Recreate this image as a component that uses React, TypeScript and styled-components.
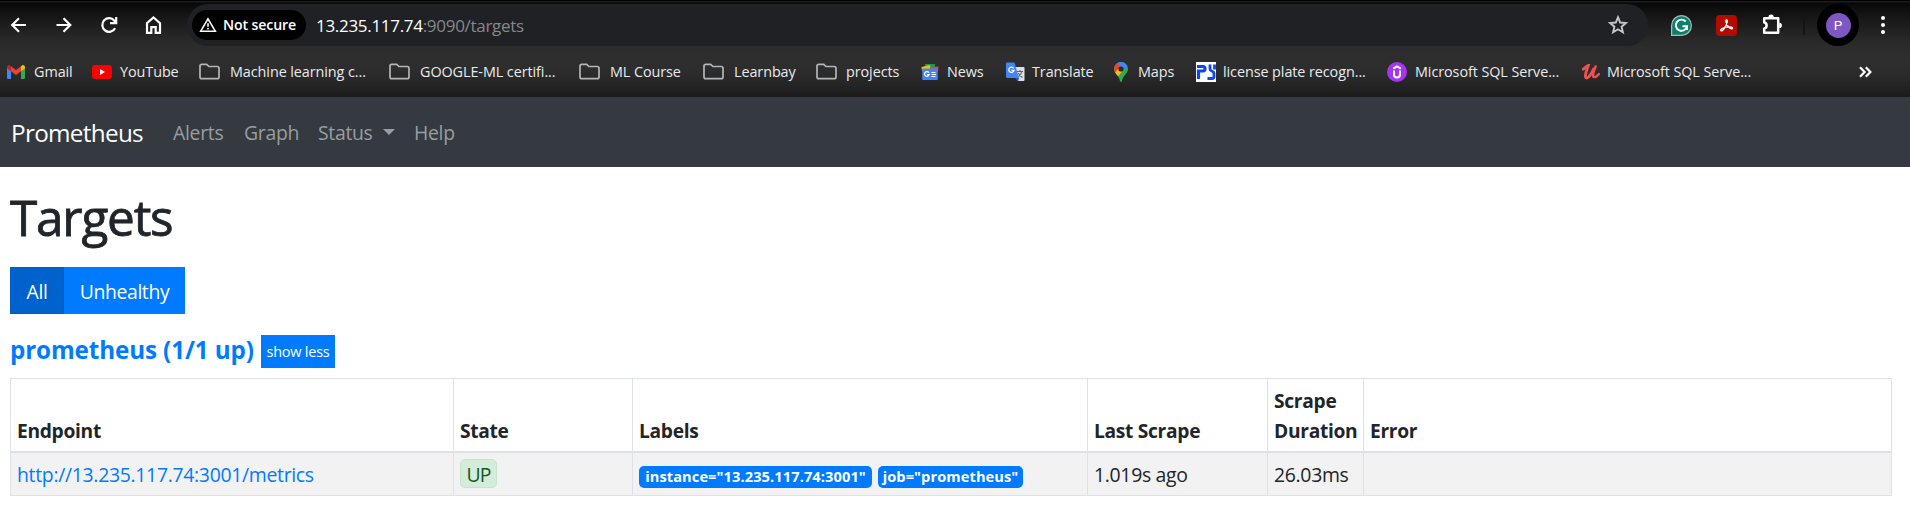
import React from 'react';
import styled, { createGlobalStyle } from 'styled-components';

const Global = createGlobalStyle`
  *, *::before, *::after { box-sizing: border-box; }
  body {
    margin: 0;
    background: #fff;
    color: #212529;
    font-family: 'Open Sans', 'Noto Sans', sans-serif;
    font-size: 19.4px;
    letter-spacing: -0.3px;
    line-height: 30px;
    overflow: hidden;
  }
  svg { display: block; flex: none; }
`;

/* ---------- browser chrome ---------- */

const Chrome = styled.header`
  height: 97px;
  display: flex;
  flex-direction: column;
  background: linear-gradient(#000 0, #000 1px, #1c1c1c 1px, #1c1c1c 2px, #080808 3px, #0e0e0e 8px, #191919 20px, #272727 38px, #2e2e2e 52px, #2d2d2d 70px, #252525 84px, #1b1b1b 97px);
  color: #fff;
`;

const Toolbar = styled.div`
  height: 50px;
  display: flex;
  align-items: center;
`;

const NavIcons = styled.div`
  width: 187px;
  padding-left: 9px;
  display: flex;
  gap: 25px;
`;

const Omnibox = styled.div`
  width: 1461px;
  height: 42px;
  border-radius: 21px;
  background: #202124;
  padding: 0 19px 0 5px;
  display: flex;
  align-items: center;
`;

const Secure = styled.div`
  width: 114px;
  height: 30px;
  border-radius: 15px;
  background: #000;
  display: flex;
  align-items: center;
  gap: 6px;
  padding-left: 7px;
  font-size: 14.2px;
  font-weight: 600;
  letter-spacing: -0.15px;
  white-space: nowrap;
`;

const Url = styled.div`
  margin-left: 10px;
  flex: 1;
  font-size: 17px;
  letter-spacing: -0.3px;
  padding-top: 1px;
`;

const UrlRest = styled.span`
  color: #85888c;
`;

const Extensions = styled.div`
  margin-left: 23px;
  display: flex;
  align-items: center;
  gap: 24px;
`;

const Divider = styled.div`
  width: 2px;
  height: 20px;
  margin: 0 12px 0 20px;
  background: #151515;
`;

const AvatarRing = styled.div`
  width: 42px;
  height: 42px;
  border-radius: 50%;
  background: #000;
  display: flex;
  align-items: center;
  justify-content: center;
`;

const Avatar = styled.div`
  width: 25px;
  height: 25px;
  border-radius: 50%;
  background: #7e57c2;
  font: 13.5px/25px Roboto, sans-serif;
  letter-spacing: 0;
  text-align: center;
`;

const Dots = styled.div`
  margin-left: 22px;
  display: flex;
  flex-direction: column;
  gap: 3px;
`;

const Dot = styled.i`
  width: 4px;
  height: 4px;
  border-radius: 50%;
  background: #fff;
`;

const Bookmarks = styled.div`
  height: 43px;
  padding-left: 7px;
  display: flex;
  align-items: center;
  font-size: 14.4px;
  letter-spacing: -0.08px;
  color: #e8eaed;
`;

const Bookmark = styled.div<{ $width: number }>`
  width: ${p => p.$width}px;
  display: flex;
  align-items: center;
  white-space: nowrap;
`;

const BookmarkIcon = styled.span<{ $slot: number }>`
  width: ${p => p.$slot}px;
  flex: none;
`;

const More = styled.div`
  margin-left: 89px;
`;

/* ---------- Prometheus page ---------- */

const Navbar = styled.nav`
  height: 70px;
  padding: 1px 0 0 11px;
  background: #343a40;
  display: flex;
  align-items: center;
  color: #9a9da0;
`;

const Brand = styled.span`
  width: 162px;
  color: #fff;
  font-size: 24.3px;
  letter-spacing: -0.7px;
`;

const NavLink = styled.span<{ $width: number }>`
  width: ${p => p.$width}px;
  display: flex;
  align-items: center;
`;

const Caret = styled.i`
  margin: -2px 0 0 10px;
  border: 6px solid transparent;
  border-top-color: currentColor;
  border-bottom: 0;
`;

const Page = styled.main`
  padding: 20px 18px 0 10px;
`;

const Title = styled.h1`
  margin: 0 0 20px;
  height: 60px;
  font-size: 49.5px;
  line-height: 61px;
  font-weight: 500;
  letter-spacing: -1.2px;
  -webkit-text-stroke: 0.8px currentColor;
`;

const ButtonGroup = styled.div`
  display: flex;
  height: 47px;
`;

const FilterButton = styled.button<{ $active?: boolean; $width: number }>`
  width: ${p => p.$width}px;
  padding: 2px 0 0;
  border: ${p => (p.$active ? '1px solid #005cbf' : '0')};
  background: ${p => (p.$active ? '#0062cc' : '#007bff')};
  color: #fff;
  font: inherit;
  letter-spacing: -0.4px;
`;

const PoolHeading = styled.div`
  height: 33px;
  margin: 21px 0 10px;
  display: flex;
  align-items: center;
  gap: 7px;
`;

const PoolName = styled.h3`
  width: 244px;
  margin: -4px 0 0;
  color: #007bff;
  font-size: 24.2px;
  font-weight: 700;
  letter-spacing: -0.1px;
  white-space: nowrap;
`;

const ShowLess = styled.button`
  width: 74px;
  height: 33px;
  padding: 0;
  border: 0;
  background: #007bff;
  color: #fff;
  font: inherit;
  font-size: 14.5px;
  letter-spacing: -0.25px;
`;

const Table = styled.table`
  width: 1882px;
  table-layout: fixed;
  border-collapse: separate;
  border-spacing: 0;
  border-right: 1px solid #dee2e6;
`;

const Col = styled.col<{ $width?: number }>`
  width: ${p => (p.$width ? `${p.$width}px` : 'auto')};
`;

const Th = styled.th`
  height: 75px;
  padding: 0 6px 5px;
  border: solid #dee2e6;
  border-width: 1px 0 2px 1px;
  text-align: left;
  vertical-align: bottom;
  font-weight: 700;
  font-size: 19.2px;
  letter-spacing: -0.3px;
`;

const Td = styled.td`
  height: 43px;
  padding: 7px 6px 5px;
  border: solid #dee2e6;
  border-width: 0 0 1px 1px;
  background: #f2f2f2;
  vertical-align: top;
  white-space: nowrap;
`;

const Endpoint = styled.a`
  color: #007bff;
`;

const State = styled.span`
  display: block;
  width: 37px;
  height: 29px;
  margin-top: -1px;
  border: 1px solid #c3e6cb;
  border-radius: 5px;
  background: #d4edda;
  color: #155724;
  line-height: 30px;
  text-align: center;
  letter-spacing: -0.9px;
`;

const Labels = styled.div`
  display: flex;
  gap: 6px;
  padding-top: 6px;
`;

const Badge = styled.span<{ $width: number }>`
  width: ${p => p.$width}px;
  height: 22px;
  border-radius: 5px;
  background: #007bff;
  color: #fff;
  font-size: 14.6px;
  font-weight: 700;
  line-height: 21px;
  letter-spacing: 0.1px;
  text-align: center;
`;

/* ---------- icons ---------- */

const stroke = { fill: 'none', stroke: '#fff', strokeWidth: 2.2 };

const Back = () => (
  <svg width="20" height="20" viewBox="0 0 20 20" {...stroke}><path d="M17 10H3.5M10 3.2L3.2 10l6.800 6.800" /></svg>
);
const Forward = () => (
  <svg width="20" height="20" viewBox="0 0 20 20" {...stroke}><path d="M2.500 10H16M9.500 3.200l6.800 6.800-6.800 6.800" /></svg>
);
const Reload = () => (
  <svg width="20" height="20" viewBox="0 0 20 20" {...stroke}><path d="M16.1 13.2A6.8 6.8 0 1 1 15.4 5.7L17 7.6" /><path d="M17.2 2v6.2H11" /></svg>
);
const Home = () => (
  <svg width="20" height="20" viewBox="0 0 20 20" {...stroke}><path d="M3 8.200L9.500 2.500 16 8.200v9.600h-4.300v-5.600H7.300v5.600H3z" /></svg>
);
const Warning = () => (
  <svg width="18" height="16" viewBox="0 0 18 16" fill="none" stroke="#fff" strokeWidth="1.6"><path d="M9 1.800L16.300 14.200H1.700z" /><path d="M9 6.200v3.600M9 11v1.600" /></svg>
);
const Star = () => (
  <svg width="22" height="22" viewBox="0 0 22 22" fill="none" stroke="#c4c6c9" strokeWidth="1.9"><path d="M11 3.2l2.2 5.3 5.7.5-4.3 3.7 1.3 5.6-4.9-3-4.9 3 1.3-5.6L3.1 9l5.7-.5z" /></svg>
);
const Grammarly = () => (
  <svg width="21" height="21" viewBox="0 0 21 21" fill="none">
    <path d="M.6 20.4V10.5A9.9 9.9 0 1 1 10.5 20.4z" fill="#0b806a" stroke="#a9bcb8" strokeWidth="1.2" />
    <path d="M14.7 6.5A5.6 5.6 0 1 0 16 11.2h-4.6M16 11v4" stroke="#fff" strokeWidth="1.9" />
  </svg>
);
const Acrobat = () => (
  <svg width="21" height="21" viewBox="0 0 21 21" fill="none">
    <rect width="21" height="21" rx="3.5" fill="#b30b00" />
    <path d="M4.8 15.6c-1.2-1.1 1.8-2.8 5.7-3.4 4.3-.7 6.6.1 6 1.3-.9 1.3-6.4-2.2-6.6-7.2-.1-2.1 1.6-2 1.4.1-.4 3.8-4.8 10.8-6.5 9.2z" stroke="#fff" strokeWidth="1.3" />
  </svg>
);
const Puzzle = () => (
  <svg width="22" height="22" viewBox="0 0 22 22">
    <path d="M3.2 4.2h14v14.6h-14v-4.4c3.2-.4 3.2-5.5 0-5.9z" fill="none" stroke="#fff" strokeWidth="2.5" strokeLinejoin="round" />
    <path d="M7.4 3.2a2.7 2.7 0 0 1 5.4 0zM18.2 8.7a2.7 2.7 0 0 1 0 5.4z" fill="#fff" />
  </svg>
);
const Gmail = () => (
  <svg width="18" height="14" viewBox="0 0 18 14">
    <path d="M0 2.5L4 5v9H1.2A1.2 1.2 0 0 1 0 12.8z" fill="#4285f4" />
    <path d="M18 2.5L14 5v9h2.8a1.2 1.2 0 0 0 1.2-1.2z" fill="#34a853" />
    <path d="M4 1.2l5 3.8 5-3.8v5L9 10 4 6.2z" fill="#ea4335" />
    <path d="M0 2A2 2 0 0 1 3.2.5L4 1.2v5L0 3.2z" fill="#c5221f" />
    <path d="M18 2A2 2 0 0 0 14.8.5L14 1.2v5l4-3z" fill="#fbbc04" />
  </svg>
);
const YouTube = () => (
  <svg width="20" height="14" viewBox="0 0 20 14"><rect width="20" height="14" rx="3.2" fill="#f00" /><path d="M8 4l5 3-5 3z" fill="#fff" /></svg>
);
const Folder = () => (
  <svg width="21" height="17" viewBox="0 0 21 17" fill="none" stroke="#b4b5b7" strokeWidth="1.7"><path d="M1 3.2Q1 1.300 2.700 1.300h5L9.900 3.500h8.300q1.800 0 1.800 1.800V14q0 1.700-1.800 1.700H2.700Q1 15.700 1 14z" /></svg>
);
const News = () => (
  <svg width="18" height="18" viewBox="0 0 18 18">
    <path d="M4 1h10v6H4z" fill="#0f9d58" />
    <path d="M.5 4L9 2l1 6H1z" fill="#fbbc04" />
    <path d="M9 4l8.500-.5L17 9H9z" fill="#ea4335" />
    <rect x="1.2" y="5.5" width="15.6" height="11.5" rx="1" fill="#4285f4" />
    <path d="M8 9.800A2.400 2.400 0 1 0 8.200 11.600H6M10.500 9.500h4M10.500 11.500h4.500M10.500 13.500h4" fill="none" stroke="#fff" strokeWidth="1.2" />
  </svg>
);
const Translate = () => (
  <svg width="19" height="20" viewBox="0 0 19 20">
    <path d="M8 5h9.500a1 1 0 0 1 1 1v12a1 1 0 0 1-1 1H12z" fill="#dfe1e5" />
    <path d="M11 9.500h6M14 8v1.500M15.800 9.500c-.6 2.800-2 4.500-4 5.700M12.300 11c.7 2 2.200 3.600 4.200 4.500" fill="none" stroke="#5f6368" strokeWidth="1.1" />
    <path d="M1 .5h7.500L13 16H1.500A1.500 1.500 0 0 1 0 14.500v-13A1 1 0 0 1 1 .5z" fill="#4285f4" />
    <path d="M9 16h4l-1 3.500z" fill="#1a56c4" />
    <path d="M7.600 6.300A2.600 2.600 0 1 0 8 8.300H5.400" fill="none" stroke="#fff" strokeWidth="1.3" />
  </svg>
);
const Maps = () => (
  <svg width="14" height="20" viewBox="0 0 14 20">
    <defs><clipPath id="pin"><path d="M7 0a7 7 0 0 1 7 7c0 4.500-5 6-6 12-.3 1.300-1.700 1.300-2 0C5 13 0 11.500 0 7a7 7 0 0 1 7-7z" /></clipPath></defs>
    <g clipPath="url(#pin)">
      <path d="M0 0h14v20H0z" fill="#34a853" />
      <path d="M0 2L4 0l3 7-4.500 5L0 8z" fill="#ea4335" />
      <path d="M1 10.500L5 6l5 1.500L3.500 15z" fill="#fbbc04" />
      <path d="M4 0h10v4l-4 4-5-4z" fill="#4285f4" />
    </g>
    <circle cx="7" cy="7" r="2.6" fill="#2b2b2b" />
  </svg>
);
const PlateSite = () => (
  <svg width="20" height="20" viewBox="0 0 20 20">
    <path d="M0 0h20v20H0z" fill="#fff" />
    <path d="M1 4.500h6q2 0 2 2.200T7 9H2.500v8" fill="none" stroke="#0a46f5" strokeWidth="3.2" />
    <path d="M14 2.500v4.300q0 1.700 1.700 2.200 2.300.7 2.300 3v2.500q0 2-2 2h-4.500M18.500 2.500v5" fill="none" stroke="#0a46f5" strokeWidth="2.8" />
  </svg>
);
const UdemyRound = () => (
  <svg width="20" height="20" viewBox="0 0 20 20">
    <circle cx="10" cy="10" r="10" fill="#a435f0" />
    <path d="M6.200 6.600L10 4.400l3.800 2.200M7 8.500v4.200q0 2.800 3 2.800t3-2.800V8.500" fill="none" stroke="#fff" strokeWidth="2" />
  </svg>
);
const UdemyScript = () => (
  <svg width="18" height="16" viewBox="0 0 18 16" fill="none" stroke="#eb5252" strokeLinecap="round">
    <path d="M1.200 5.200C3 3.800 4.500 2.600 6.300 1.600 5 5.500 2.800 10 3.500 13.200c1.500 3 6-2.700 8-8.200" strokeWidth="2.900" />
    <path d="M13.600 2.500c-1.400 3.500-3.300 8-2.300 10 1.600 1.600 3.800-.5 5.500-2.300" strokeWidth="2.500" />
  </svg>
);
const Chevrons = () => (
  <svg width="13" height="12" viewBox="0 0 13 12" {...stroke}><path d="M1 1.200L5.600 6 1 10.800M6.800 1.200L11.400 6l-4.600 4.800" /></svg>
);

const bookmarks: [string, React.FC, number, number][] = [
  ['Gmail', Gmail, 27, 85],
  ['YouTube', YouTube, 28, 107],
  ['Machine learning c...', Folder, 31, 190],
  ['GOOGLE-ML certifi...', Folder, 31, 190],
  ['ML Course', Folder, 31, 124],
  ['Learnbay', Folder, 31, 113],
  ['projects', Folder, 30, 105],
  ['News', News, 26, 85],
  ['Translate', Translate, 26, 108],
  ['Maps', Maps, 24, 82],
  ['license plate recogn...', PlateSite, 27, 191],
  ['Microsoft SQL Serve...', UdemyRound, 28, 195],
  ['Microsoft SQL Serve...', UdemyScript, 25, 188],
];

export default function App() {
  return (
    <>
      <Global />
      <Chrome>
        <Toolbar>
          <NavIcons><Back /><Forward /><Reload /><Home /></NavIcons>
          <Omnibox>
            <Secure><Warning />Not secure</Secure>
            <Url>13.235.117.74<UrlRest>:9090/targets</UrlRest></Url>
            <Star />
          </Omnibox>
          <Extensions><Grammarly /><Acrobat /><Puzzle /></Extensions>
          <Divider />
          <AvatarRing><Avatar>P</Avatar></AvatarRing>
          <Dots><Dot /><Dot /><Dot /></Dots>
        </Toolbar>
        <Bookmarks>
          {bookmarks.map(([name, Icon, slot, width], i) => (
            <Bookmark key={i} $width={width}>
              <BookmarkIcon $slot={slot}><Icon /></BookmarkIcon>{name}
            </Bookmark>
          ))}
          <More><Chevrons /></More>
        </Bookmarks>
      </Chrome>
      <Navbar>
        <Brand>Prometheus</Brand>
        <NavLink $width={71}>Alerts</NavLink>
        <NavLink $width={74}>Graph</NavLink>
        <NavLink $width={96}>Status<Caret /></NavLink>
        <NavLink $width={50}>Help</NavLink>
      </Navbar>
      <Page>
        <Title>Targets</Title>
        <ButtonGroup>
          <FilterButton $active $width={54}>All</FilterButton>
          <FilterButton $width={121}>Unhealthy</FilterButton>
        </ButtonGroup>
        <PoolHeading>
          <PoolName>prometheus (1/1 up)</PoolName>
          <ShowLess>show less</ShowLess>
        </PoolHeading>
        <Table>
          <colgroup>
            <Col $width={443} /><Col $width={179} /><Col $width={455} /><Col $width={180} /><Col $width={96} /><Col />
          </colgroup>
          <thead>
            <tr>
              <Th>Endpoint</Th><Th>State</Th><Th>Labels</Th><Th>Last Scrape</Th><Th>Scrape Duration</Th><Th>Error</Th>
            </tr>
          </thead>
          <tbody>
            <tr>
              <Td><Endpoint>http://13.235.117.74:3001/metrics</Endpoint></Td>
              <Td><State>UP</State></Td>
              <Td>
                <Labels>
                  <Badge $width={233}>instance="13.235.117.74:3001"</Badge>
                  <Badge $width={145}>job="prometheus"</Badge>
                </Labels>
              </Td>
              <Td>1.019s ago</Td>
              <Td>26.03ms</Td>
              <Td />
            </tr>
          </tbody>
        </Table>
      </Page>
    </>
  );
}
